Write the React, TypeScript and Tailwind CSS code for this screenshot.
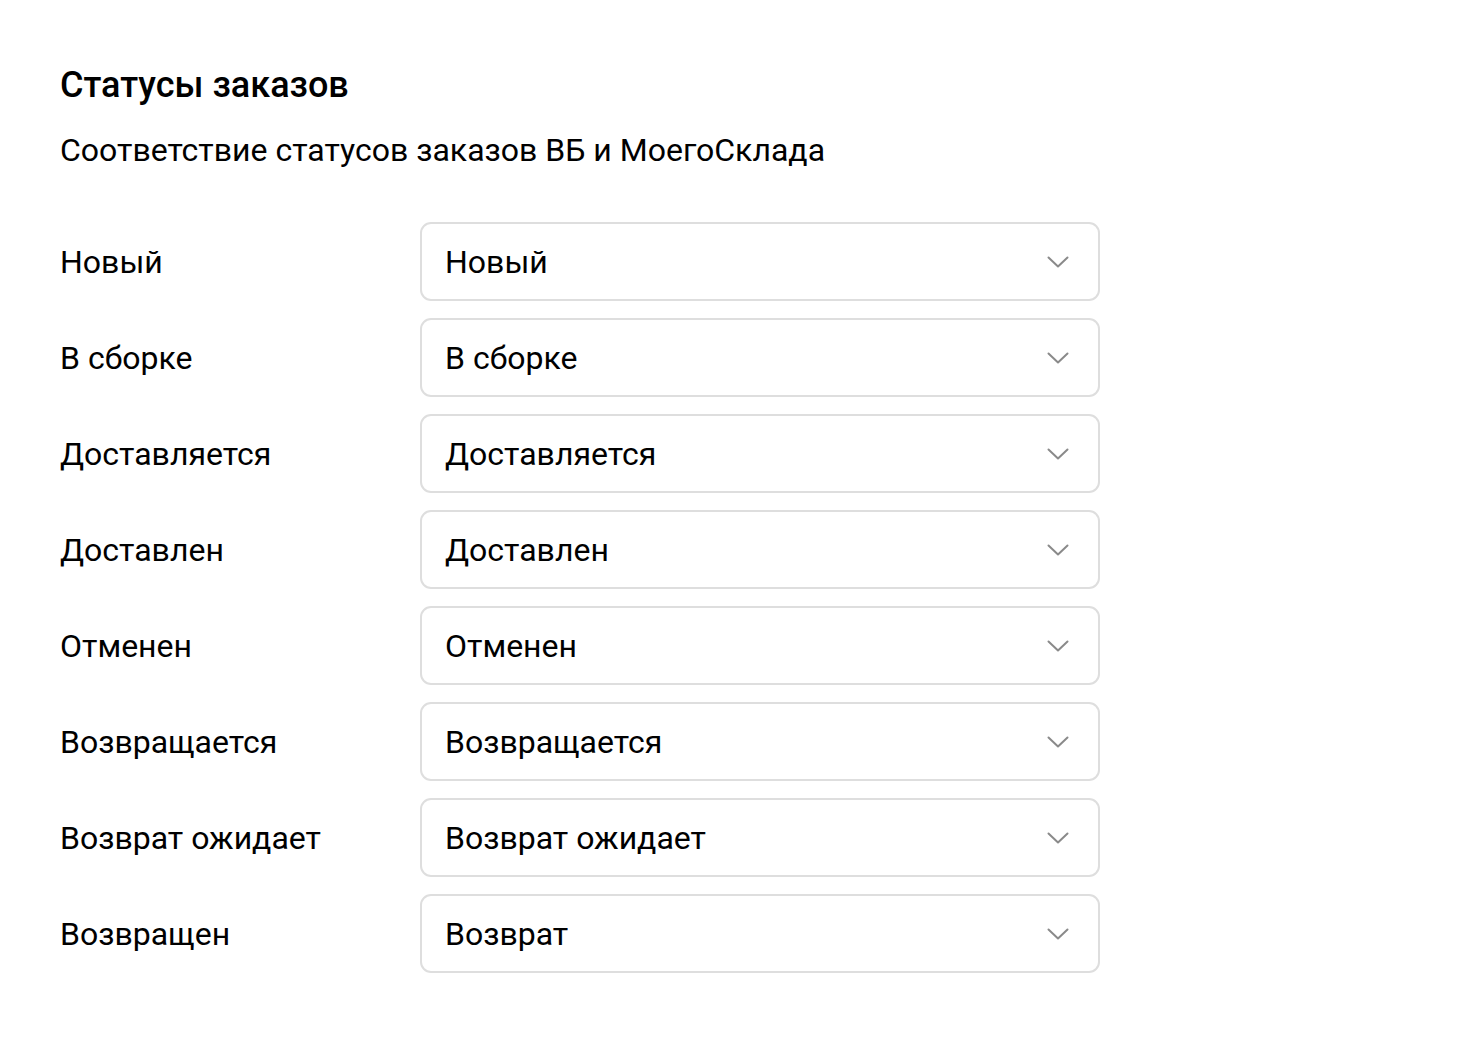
const rows: [string, string][] = [
  ["Новый", "Новый"],
  ["В сборке", "В сборке"],
  ["Доставляется", "Доставляется"],
  ["Доставлен", "Доставлен"],
  ["Отменен", "Отменен"],
  ["Возвращается", "Возвращается"],
  ["Возврат ожидает", "Возврат ожидает"],
  ["Возвращен", "Возврат"],
];

function Chevron() {
  return (
    <svg width="22" height="12" viewBox="0 0 22 12" fill="none" className="text-[#8a8a8a]">
      <path d="M1.5 1.5 11 10.5 20.5 1.5" stroke="currentColor" strokeWidth="2" strokeLinecap="round" strokeLinejoin="round" />
    </svg>
  );
}

export default function App() {
  return (
    <main className="min-h-screen bg-white px-[60px] pt-[63px] text-black" style={{ fontFamily: "Roboto, 'Noto Sans', sans-serif" }}>
      <h1 className="text-[36px] font-medium leading-[44px]">Статусы заказов</h1>
      <p className="mt-[21px] text-[32px] leading-[44px]">Соответствие статусов заказов ВБ и МоегоСклада</p>

      <div className="mt-[50px] flex flex-col gap-[17px]">
        {rows.map(([wb, ms]) => (
          <div key={wb} className="flex items-center">
            <span className="w-[360px] text-[32px]">{wb}</span>
            <button className="flex h-[79px] w-[680px] items-center justify-between rounded-[11px] border-2 border-[#dedede] pl-[23px] pr-[29px] text-left text-[32px]">
              <span>{ms}</span>
              <Chevron />
            </button>
          </div>
        ))}
      </div>
    </main>
  );
}
